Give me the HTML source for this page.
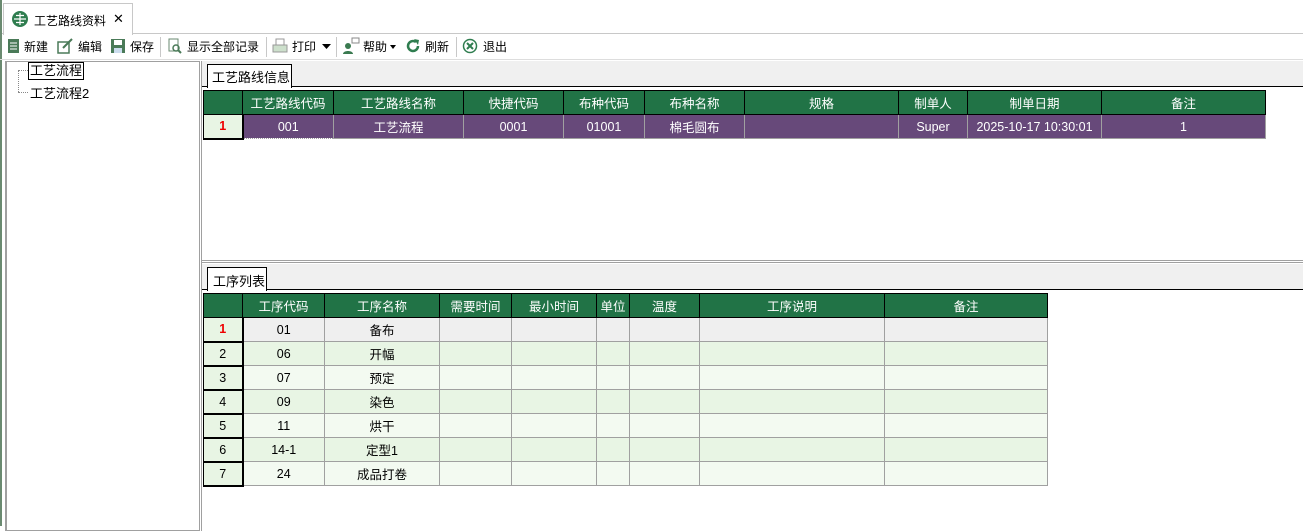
<!DOCTYPE html>
<html><head><meta charset="utf-8"><style>
*{box-sizing:border-box;margin:0;padding:0}
body{width:1303px;height:526px;overflow:hidden;background:#fff;font-family:"Liberation Sans","Noto Sans CJK SC",sans-serif;font-size:12px;color:#000;position:relative}
.a{position:absolute}
table{border-collapse:collapse;table-layout:fixed;position:absolute}
td{height:24px;text-align:center;border:1px solid #a0a0a0;white-space:nowrap;overflow:hidden;font-size:12.5px}
tr.h td{background:#217346;color:#fff;border:1px solid #000}
td.rh{background:#e8f5e4;border:1px solid #000;border-width:1px 2px 2px 1px}
.tb span{position:absolute;top:38px;font-size:12px}
.sep{position:absolute;top:37px;width:1px;height:20px;background:#c8c8c8}
</style></head><body>
<div class="a" style="left:0;top:0;width:1303px;height:34px;background:#fff;border-bottom:1px solid #c8c8c8"></div>
<div class="a" style="left:0;top:0;width:2px;height:526px;background:#6a8a70"></div>
<div class="a" style="left:3px;top:3px;width:130px;height:32px;background:#fff;border:1px solid #c8c8c8;border-bottom:none"></div>
<div class="a" style="left:12px;top:11px;width:16px;height:16px;border-radius:50%;background:#2f7d4f"></div>
<svg class="a" style="left:12px;top:11px" width="16" height="16"><path d="M8 2v12M2 8h12M4 4.5h8M4 11.5h8" stroke="#fff" stroke-width="1.2" fill="none"/></svg>
<span class="a" style="left:34px;top:12px;font-size:12px">工艺路线资料</span>
<span class="a" style="left:113px;top:11px;font-size:13px">✕</span>
<div class="tb">
<svg class="a" style="left:7px;top:38px" width="13" height="16"><rect x="1" y="1" width="11" height="14" fill="#4a7a58"/><path d="M3 5h7M3 8h7M3 11h7" stroke="#fff"/></svg>
<span style="left:24px">新建</span>
<svg class="a" style="left:57px;top:38px" width="17" height="16"><rect x="1" y="4" width="11" height="11" fill="none" stroke="#4a7a58" stroke-width="1.5"/><path d="M6 10l9-9" stroke="#4a7a58" stroke-width="2"/></svg>
<span style="left:78px">编辑</span>
<svg class="a" style="left:110px;top:38px" width="16" height="16"><rect x="1" y="1" width="14" height="14" fill="#4a7a58"/><rect x="4" y="2" width="8" height="5" fill="#fff"/><rect x="4" y="10" width="8" height="5" fill="#cde"/></svg>
<span style="left:130px">保存</span>
<div class="sep" style="left:160px"></div>
<svg class="a" style="left:167px;top:38px" width="16" height="16"><rect x="2" y="1" width="9" height="12" fill="none" stroke="#6a8a70"/><circle cx="9" cy="10" r="3" fill="none" stroke="#4a7a58" stroke-width="1.5"/><path d="M11 12l3 3" stroke="#4a7a58" stroke-width="2"/></svg>
<span style="left:187px">显示全部记录</span>
<div class="sep" style="left:266px"></div>
<svg class="a" style="left:272px;top:38px" width="16" height="16"><rect x="4" y="1" width="8" height="6" fill="none" stroke="#999"/><rect x="1" y="7" width="14" height="7" fill="#cde0cc" stroke="#999"/></svg>
<span style="left:292px">打印</span>
<svg class="a" style="left:322px;top:44px" width="9" height="5"><path d="M0 0h9L4.5 5z" fill="#000"/></svg>
<div class="sep" style="left:336px"></div>
<svg class="a" style="left:342px;top:37px" width="18" height="18"><circle cx="6" cy="9" r="3" fill="#3a7a50"/><path d="M1 17c0-4 10-4 10 0z" fill="#3a7a50"/><rect x="10" y="1" width="7" height="5" fill="none" stroke="#888"/></svg>
<span style="left:363px">帮助</span>
<svg class="a" style="left:390px;top:45px" width="6" height="4"><path d="M0 0h6L3 4z" fill="#000"/></svg>
<svg class="a" style="left:405px;top:38px" width="16" height="16"><path d="M13 8a5 5 0 1 1-2-4" stroke="#2f7d4f" stroke-width="2.5" fill="none"/><path d="M9 1l5 1-1 5z" fill="#2f7d4f"/></svg>
<span style="left:425px">刷新</span>
<div class="sep" style="left:456px"></div>
<svg class="a" style="left:462px;top:38px" width="16" height="16"><circle cx="8" cy="8" r="6.5" fill="none" stroke="#2f7d4f" stroke-width="1.5"/><path d="M5 5l6 6M11 5l-6 6" stroke="#2f7d4f" stroke-width="2"/></svg>
<span style="left:483px">退出</span>
</div>
<div class="a" style="left:0;top:59px;width:1303px;height:1px;background:#ddd"></div>
<div class="a" style="left:5px;top:61px;width:195px;height:470px;border:1px solid #a0a0a0;border-left:2px solid #a0a0a0"></div>
<div class="a" style="left:18px;top:70px;width:1px;height:22px;border-left:1px dotted #888"></div>
<div class="a" style="left:18px;top:70px;width:10px;border-top:1px dotted #888"></div>
<div class="a" style="left:18px;top:92px;width:10px;border-top:1px dotted #888"></div>
<span class="a" style="left:28px;top:62px;border:1px solid #000;padding:0 1px;font-size:13px;line-height:16px">工艺流程</span>
<span class="a" style="left:30px;top:83px;font-size:13px">工艺流程2</span>
<div class="a" style="left:201px;top:61px;width:1px;height:470px;background:#a0a0a0"></div>
<div class="a" style="left:202px;top:61px;width:1101px;height:26px;background:#f0f0f0;border-bottom:1px solid #000"></div>
<div class="a" style="left:207px;top:64px;width:85px;height:24px;background:#fff;border:1px solid #000;border-bottom:none"></div>
<span class="a" style="left:212px;top:67px;font-size:13px">工艺路线信息</span>
<table style="left:203px;top:90px;width:1062px">
<colgroup><col style="width:39px"><col style="width:91px"><col style="width:130px"><col style="width:100px"><col style="width:81px"><col style="width:100px"><col style="width:154px"><col style="width:69px"><col style="width:134px"><col style="width:164px"></colgroup>
<tr class="h"><td></td><td>工艺路线代码</td><td>工艺路线名称</td><td>快捷代码</td><td>布种代码</td><td>布种名称</td><td>规格</td><td>制单人</td><td>制单日期</td><td>备注</td></tr>
<tr style="background:#67497a;color:#fff"><td class="rh" style="color:#e00;font-weight:bold">1</td><td style="border-style:dotted">001</td><td>工艺流程</td><td>0001</td><td>01001</td><td>棉毛圆布</td><td></td><td>Super</td><td>2025-10-17 10:30:01</td><td>1</td></tr>
</table>
<div class="a" style="left:202px;top:260px;width:1101px;height:3px;border-top:1px solid #a0a0a0;border-bottom:1px solid #a0a0a0"></div>
<div class="a" style="left:202px;top:264px;width:1101px;height:26px;background:#f0f0f0;border-bottom:1px solid #000"></div>
<div class="a" style="left:207px;top:267px;width:60px;height:24px;background:#fff;border:1px solid #000;border-bottom:none"></div>
<span class="a" style="left:213px;top:271px;font-size:13px">工序列表</span>
<table style="left:203px;top:293px;width:844px">
<colgroup><col style="width:39px"><col style="width:82px"><col style="width:115px"><col style="width:72px"><col style="width:85px"><col style="width:33px"><col style="width:70px"><col style="width:185px"><col style="width:163px"></colgroup>
<tr class="h"><td></td><td>工序代码</td><td>工序名称</td><td>需要时间</td><td>最小时间</td><td>单位</td><td>温度</td><td>工序说明</td><td>备注</td></tr>
<tr style="background:#efefef"><td class="rh" style="color:#e00;font-weight:bold">1</td><td>01</td><td>备布</td><td></td><td></td><td></td><td></td><td></td><td></td></tr>
<tr style="background:#e8f5e4"><td class="rh">2</td><td>06</td><td>开幅</td><td></td><td></td><td></td><td></td><td></td><td></td></tr>
<tr style="background:#f3faf1"><td class="rh">3</td><td>07</td><td>预定</td><td></td><td></td><td></td><td></td><td></td><td></td></tr>
<tr style="background:#e8f5e4"><td class="rh">4</td><td>09</td><td>染色</td><td></td><td></td><td></td><td></td><td></td><td></td></tr>
<tr style="background:#f3faf1"><td class="rh">5</td><td>11</td><td>烘干</td><td></td><td></td><td></td><td></td><td></td><td></td></tr>
<tr style="background:#e8f5e4"><td class="rh">6</td><td>14-1</td><td>定型1</td><td></td><td></td><td></td><td></td><td></td><td></td></tr>
<tr style="background:#f3faf1"><td class="rh">7</td><td>24</td><td>成品打卷</td><td></td><td></td><td></td><td></td><td></td><td></td></tr>
</table>
</body></html>
